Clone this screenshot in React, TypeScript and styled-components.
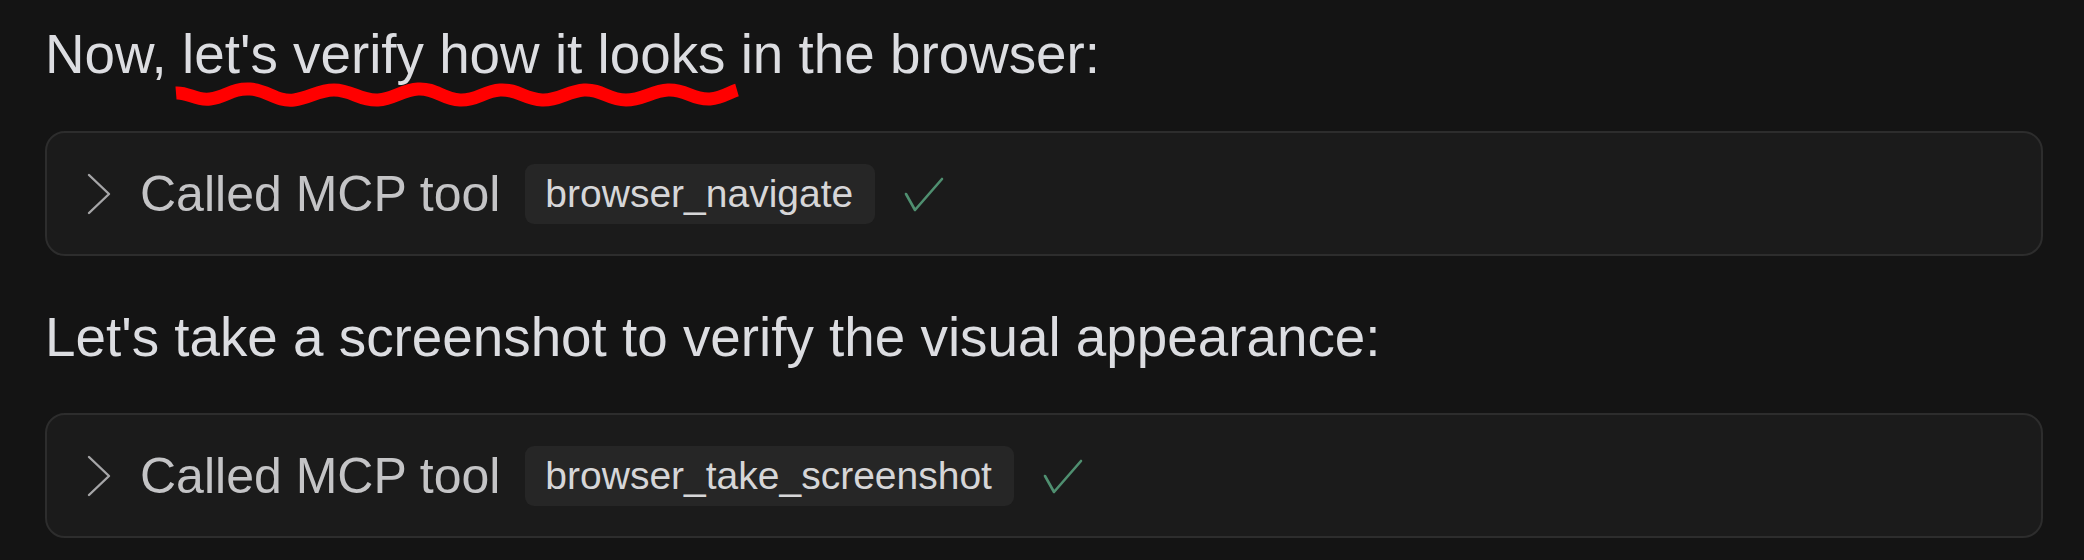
import React from 'react';
import styled, { createGlobalStyle } from 'styled-components';

const GlobalStyle = createGlobalStyle`
  html, body {
    margin: 0;
    padding: 0;
    background: #141414;
  }
`;

const Page = styled.div`
  min-height: 560px;
  box-sizing: border-box;
  padding: 22px 41px 0 45px;
  background: #141414;
  font-family: 'Liberation Sans', Arial, sans-serif;
`;

const Message = styled.p<{ $gap: number }>`
  position: relative;
  margin: 0 0 ${(p) => p.$gap}px 0;
  font-size: 54.8px;
  line-height: 65px;
  color: #dcdde1;
  white-space: nowrap;
`;

const Scribble = styled.svg`
  position: absolute;
  left: 125px;
  top: 55px;
  overflow: visible;
  pointer-events: none;
`;

const ToolCard = styled.div<{ $gap: number }>`
  box-sizing: border-box;
  height: 125px;
  margin-bottom: ${(p) => p.$gap}px;
  display: flex;
  align-items: center;
  padding-left: 39px;
  background: #1b1b1b;
  border: 2px solid #2d2d2d;
  border-radius: 20px;
`;

const Chevron = styled.svg`
  flex: none;
  margin-right: 28px;
`;

const Label = styled.span`
  font-size: 50px;
  color: #c4c4c6;
  margin-right: 25px;
`;

const ToolBadge = styled.span`
  display: inline-flex;
  align-items: center;
  height: 60px;
  padding: 0 22px 0 20px;
  border-radius: 9px;
  background: #262626;
  font-size: 39px;
  color: #d6d6d8;
  margin-right: 29px;
`;

const Check = styled.svg`
  flex: none;
`;

function ToolCall({ name, gap }: { name: string; gap: number }) {
  return (
    <ToolCard $gap={gap}>
      <Chevron width="26" height="44" viewBox="0 0 26 44">
        <polyline points="3,3 23,22 3,41" fill="none" stroke="#a6a6a8" strokeWidth="2.4" strokeLinecap="round" strokeLinejoin="round" />
      </Chevron>
      <Label>Called MCP tool</Label>
      <ToolBadge>{name}</ToolBadge>
      <Check width="40" height="36" viewBox="0 0 40 36">
        <polyline points="2,18 11,34 38,3" fill="none" stroke="#4f8f70" strokeWidth="2.6" strokeLinecap="round" strokeLinejoin="round" />
      </Check>
    </ToolCard>
  );
}

export default function App() {
  return (
    <>
      <GlobalStyle />
      <Page>
        <Message $gap={44}>
          Now, let's verify how it looks in the browser:
          <Scribble width="580" height="40" viewBox="0 0 580 40">
            <path
              d="M6,16 C18,15 26,24 40,22 C56,20 62,11 80,12 C98,13 106,25 124,23 C140,21 148,13 164,13 C182,13 190,24 208,23 C224,22 232,13 248,12 C266,11 272,22 290,23 C306,24 314,14 330,13 C348,12 354,22 372,23 C388,24 398,14 414,13 C432,12 438,23 456,23 C472,23 482,14 498,13 C516,12 522,23 540,22 C552,21 560,15 567,13"
              fill="none"
              stroke="#ff0000"
              strokeWidth="13"
              strokeLinejoin="round"
            />
          </Scribble>
        </Message>
        <ToolCall name="browser_navigate" gap={49} />
        <Message $gap={43}>Let's take a screenshot to verify the visual appearance:</Message>
        <ToolCall name="browser_take_screenshot" gap={0} />
      </Page>
    </>
  );
}
